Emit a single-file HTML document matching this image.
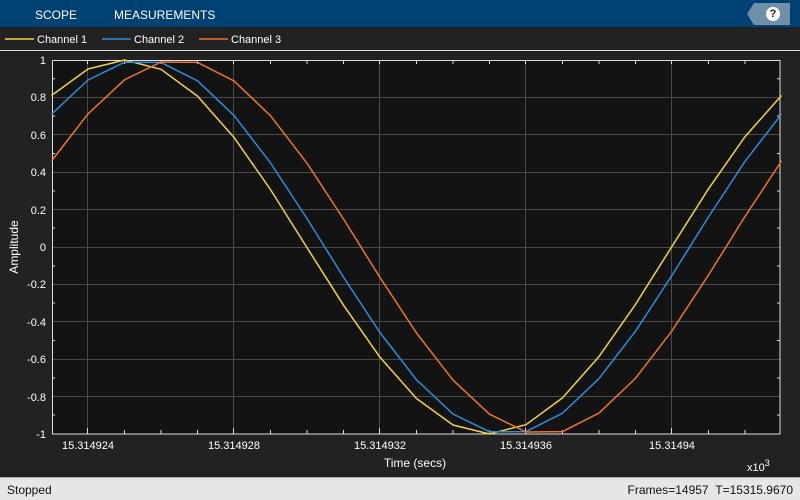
<!DOCTYPE html>
<html><head><meta charset="utf-8">
<style>
*{margin:0;padding:0;box-sizing:border-box}
body{width:800px;height:500px;overflow:hidden;background:#222;font-family:"Liberation Sans",sans-serif;position:relative}
.top{position:absolute;left:0;top:0;width:800px;height:27px;background:#004174;color:#fff;font-size:12px}
.top span{position:absolute;top:8px}
.help{position:absolute;left:747px;top:3px;width:43px;height:22px;background:#6f8fab;clip-path:polygon(7px 0,100% 0,100% 100%,7px 100%,0 50%)}
.help i{position:absolute;left:19px;top:4px;width:14px;height:14px;border-radius:50%;background:#fff;color:#222;font-style:normal;font-weight:bold;font-size:11px;text-align:center;line-height:14px}
.status{position:absolute;left:0;top:477px;width:800px;height:23px;background:#e6e6e6;border-top:1px solid #aaa;color:#111;font-size:12px}
</style></head><body>
<div class="top"><span style="left:35px">SCOPE</span><span style="left:114px">MEASUREMENTS</span><div class="help"><i>?</i></div></div>
<svg width="800" height="450" style="position:absolute;left:0;top:27px" viewBox="0 27 800 450" font-family="Liberation Sans, sans-serif">
<line x1="5" y1="39" x2="34" y2="39" stroke="#f5d23c" stroke-width="1.5"/><text x="37" y="43" fill="#fff" font-size="11">Channel 1</text>
<line x1="102" y1="39" x2="131" y2="39" stroke="#2a8ee0" stroke-width="1.5"/><text x="134" y="43" fill="#fff" font-size="11">Channel 2</text>
<line x1="199" y1="39" x2="228" y2="39" stroke="#f0732a" stroke-width="1.5"/><text x="231" y="43" fill="#fff" font-size="11">Channel 3</text>
<line x1="0" y1="50.5" x2="800" y2="50.5" stroke="#ddd" stroke-width="1"/>
<rect x="52" y="60" width="728" height="374" fill="#131313"/>
<g stroke="#4a4a4a" stroke-width="1">
<line x1="87.5" y1="60" x2="87.5" y2="434"/><line x1="233.5" y1="60" x2="233.5" y2="434"/><line x1="379.5" y1="60" x2="379.5" y2="434"/><line x1="525.5" y1="60" x2="525.5" y2="434"/><line x1="671.5" y1="60" x2="671.5" y2="434"/>
<line x1="52" y1="97.5" x2="780" y2="97.5"/><line x1="52" y1="134.5" x2="780" y2="134.5"/><line x1="52" y1="172.5" x2="780" y2="172.5"/><line x1="52" y1="209.5" x2="780" y2="209.5"/><line x1="52" y1="247.5" x2="780" y2="247.5"/><line x1="52" y1="284.5" x2="780" y2="284.5"/><line x1="52" y1="321.5" x2="780" y2="321.5"/><line x1="52" y1="359.5" x2="780" y2="359.5"/><line x1="52" y1="396.5" x2="780" y2="396.5"/>
</g>
<g stroke="#ddd" stroke-width="1">
<path d="M124.5 60v4M161 60v4M197.5 60v4M270.5 60v4M307 60v4M343.5 60v4M416.5 60v4M453 60v4M489.5 60v4M562.5 60v4M599 60v4M635.5 60v4M708.5 60v4M745 60v4M87.5 60v4M233.5 60v4M379.5 60v4M525.5 60v4M671.5 60v4"/>
<path d="M124.5 434v-4M161 434v-4M197.5 434v-4M270.5 434v-4M307 434v-4M343.5 434v-4M416.5 434v-4M453 434v-4M489.5 434v-4M562.5 434v-4M599 434v-4M635.5 434v-4M708.5 434v-4M745 434v-4M87.5 434v-6M233.5 434v-6M379.5 434v-6M525.5 434v-6M671.5 434v-6"/>
<path d="M52 78.7h3M52 116h3M52 153.5h3M52 191h3M52 228h3M52 266h3M52 303h3M52 340.5h3M52 378h3M52 415h3M780 78.7h-3M780 116h-3M780 153.5h-3M780 191h-3M780 228h-3M780 266h-3M780 303h-3M780 340.5h-3M780 378h-3M780 415h-3"/>
<rect x="52.5" y="60.5" width="727.5" height="373.5" fill="none"/>
</g>
<g fill="none" stroke-width="1.5" stroke-linejoin="round">
<polyline stroke="#f5d23c" points="51.5,95.5 88,69 124.5,60 161,69.3 197.5,96.1 234,137.4 270.5,189.6 307,247.6 343.5,305.2 380,357.3 416.5,398.5 453,425 489.5,434 526,424.7 562.5,397.9 599,356.6 635.5,304.4 672,246.4 708.5,188.8 745,136.7 781.5,95.5"/>
<polyline stroke="#2a8ee0" points="51.5,114.2 88,80 124.5,62.2 161,62.4 197.5,80.8 234,115.4 270.5,162.9 307,218.6 343.5,277.1 380,332.6 416.5,379.8 453,414 489.5,431.8 526,431.6 562.5,413.2 599,378.6 635.5,331.2 672,275.4 708.5,216.9 745,161.4 781.5,114.2"/>
<polyline stroke="#f0732a" points="51.5,161 88,113.9 124.5,79.8 161,62 197.5,62.4 234,80.9 270.5,115.7 307,163.2 343.5,219 380,277.5 416.5,333 453,380.1 489.5,414.2 526,432 562.5,431.6 599,413.1 635.5,378.3 672,330.8 708.5,275 745,216.5 781.5,161"/>
</g>
<g fill="#fff" font-size="11" text-anchor="end">
<text x="46" y="64">1</text><text x="46" y="101">0.8</text><text x="46" y="139">0.6</text><text x="46" y="176">0.4</text><text x="46" y="214">0.2</text><text x="46" y="251">0</text><text x="46" y="288">-0.2</text><text x="46" y="326">-0.4</text><text x="46" y="363">-0.6</text><text x="46" y="401">-0.8</text><text x="46" y="438">-1</text>
</g>
<g fill="#fff" font-size="11" text-anchor="middle">
<text x="88" y="449">15.314924</text><text x="234" y="449">15.314928</text><text x="380" y="449">15.314932</text><text x="526" y="449">15.314936</text><text x="672" y="449">15.31494</text>
<text x="415" y="467" font-size="12">Time (secs)</text>
<text x="14" y="247" font-size="12" transform="rotate(-90 14 247)" dy="4">Amplitude</text>
</g>
<text x="747" y="471" fill="#fff" font-size="11">x10<tspan dy="-5" font-size="9">3</tspan></text>
</svg>
<div class="status"><span style="position:absolute;left:7px;top:5px">Stopped</span><span style="position:absolute;right:7px;top:5px">Frames=14957&nbsp;&nbsp;T=15315.9670</span></div>
</body></html>
